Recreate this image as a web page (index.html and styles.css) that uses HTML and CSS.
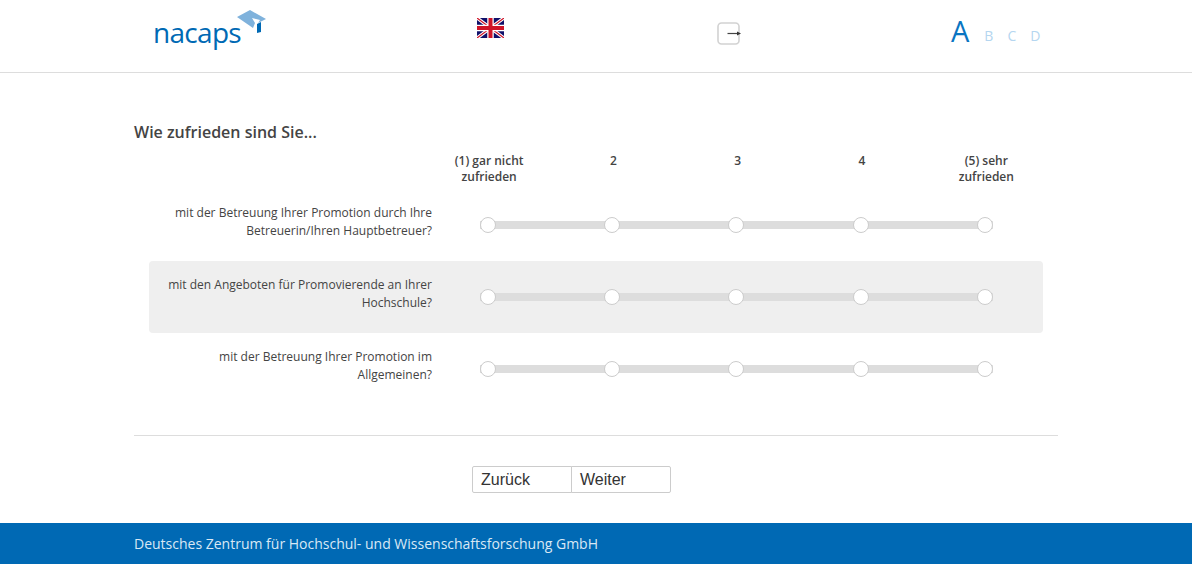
FILE: index.html
```html
<!DOCTYPE html>
<html lang="de">
<head>
    <meta charset="UTF-8">
    <title>nacaps</title>
    <link rel="stylesheet" href="styles.css">
</head>
<body>
    <header class="top">
        <div class="logo">
            <span class="logo-text">nacaps</span>
            <svg class="logo-cap" width="30" height="24" viewBox="0 0 30 24">
                <polygon fill="#7fb2dc" points="0,7 13,0 29,9 21,13 23,10 15,8 18,13 16,18"/>
                <polygon fill="#0069b4" points="20,14 24,12 24,22 20,23"/>
            </svg>
        </div>
        <a class="flag" href="#">
            <svg width="27" height="20" viewBox="0 0 27 20">
                <rect width="27" height="20" fill="#10106a"/>
                <path d="M0 0L27 20M27 0L0 20" stroke="#fff" stroke-width="3.4"/>
                <path d="M0 0L27 20M27 0L0 20" stroke="#cf1428" stroke-width="1.2"/>
                <path d="M13.5 0V20M0 10H27" stroke="#fff" stroke-width="6.5"/>
                <path d="M13.5 0V20M0 10H27" stroke="#cf1428" stroke-width="4"/>
            </svg>
        </a>
        <a class="logout" href="#">
            <svg width="24" height="23" viewBox="0 0 24 23">
                <rect x="1" y="1" width="21" height="21" rx="3.5" fill="#fff" stroke="#d2d2d2" stroke-width="1.6"/>
                <path d="M10.5 11.5H21" stroke="#444" stroke-width="1.2"/>
                <polygon fill="#333" points="20,9.5 24,11.5 20,13.5"/>
            </svg>
        </a>
        <div class="sizes">
            <a class="size-on" href="#">A</a>
            <a href="#">B</a>
            <a href="#">C</a>
            <a href="#">D</a>
        </div>
    </header>

    <main class="survey">
        <h1>Wie zufrieden sind Sie...</h1>

        <div class="scale">
            <span>(1) gar nicht zufrieden</span>
            <span>2</span>
            <span>3</span>
            <span>4</span>
            <span>(5) sehr zufrieden</span>
        </div>

        <div class="row">
            <p>mit der Betreuung Ihrer Promotion durch Ihre Betreuerin/Ihren Hauptbetreuer?</p>
            <div class="slider"><i></i><i></i><i></i><i></i><i></i></div>
        </div>
        <div class="row row-alt">
            <p>mit den Angeboten für Promovierende an Ihrer Hochschule?</p>
            <div class="slider"><i></i><i></i><i></i><i></i><i></i></div>
        </div>
        <div class="row">
            <p>mit der Betreuung Ihrer Promotion im Allgemeinen?</p>
            <div class="slider"><i></i><i></i><i></i><i></i><i></i></div>
        </div>

        <div class="nav">
            <button>Zurück</button>
            <button>Weiter</button>
        </div>
    </main>

    <footer class="bottom">Deutsches Zentrum für Hochschul- und Wissenschaftsforschung GmbH</footer>
</body>
</html>
```

FILE: styles.css
```css
body {
    margin: 0;
    font-family: "Open Sans", sans-serif;
    font-size: 12px;
    color: #444;
    background-color: #fff;
}
a {
    text-decoration: none;
}
.top {
    display: grid;
    grid-template-columns: 324px 240px 234px auto;
    height: 72px;
    padding-left: 153px;
    border-bottom: 1px solid #ddd;
}
.logo {
    display: flex;
    align-items: flex-start;
}
.logo-text {
    margin-top: 13px;
    font-size: 28px;
    line-height: 38px;
    font-weight: 500;
    letter-spacing: -0.7px;
    color: #0069b4;
}
.logo-cap {
    margin: 10px 0 0 -4px;
}
.flag {
    padding-top: 18px;
}
.logout {
    padding-top: 22px;
}
.sizes {
    display: flex;
    align-items: flex-start;
    gap: 14px;
    padding-top: 11px;
    font-size: 14px;
}
.sizes a {
    margin-top: 15px;
    line-height: 20px;
    color: #b5d6f0;
}
.sizes .size-on {
    margin: 0 1px 0 0;
    font-size: 29px;
    line-height: 40px;
    font-weight: 500;
    color: #0a75c2;
}
.survey {
    width: 924px;
    margin: 0 auto;
    padding-top: 48px;
}
h1 {
    margin: 0;
    font-size: 16px;
    line-height: 22px;
    font-weight: 600;
}
.scale {
    display: grid;
    grid-template-columns: repeat(5, 124.3px);
    margin-left: 293px;
    padding-top: 10px;
    height: 36px;
    line-height: 16px;
    font-weight: 600;
    text-align: center;
}
.scale span {
    padding: 0 22px;
}
.row {
    display: flex;
    align-items: center;
    height: 72px;
    margin: 0 15px;
    border-radius: 4px;
}
.row-alt {
    background-color: #efefef;
}
.row p {
    width: 270px;
    margin: 0 0 6px 13px;
    line-height: 18px;
    text-align: right;
}
.slider {
    display: flex;
    justify-content: space-between;
    width: 512.8px;
    margin-left: 48px;
    background: linear-gradient(#ddd, #ddd) center / 100% 8px no-repeat;
}
.slider i {
    width: 14px;
    height: 14px;
    border: 1px solid #ccc;
    border-radius: 50%;
    background-color: #fff;
}
.nav {
    display: flex;
    justify-content: center;
    margin-top: 30px;
    padding: 30px 49px 0 0;
    border-top: 1px solid #ddd;
}
.nav button {
    width: 100px;
    height: 27px;
    padding: 0 8px;
    border: 1px solid #ccc;
    border-radius: 0;
    background-color: #fff;
    font-family: "Liberation Sans", sans-serif;
    font-size: 16px;
    color: #333;
    text-align: left;
}
.nav button:first-child {
    border-radius: 2px 0 0 2px;
}
.nav button:last-child {
    margin-left: -1px;
    border-radius: 0 2px 2px 0;
}
.bottom {
    height: 41px;
    margin-top: 30px;
    padding-left: 134px;
    background-color: #0069b4;
    font-size: 14px;
    line-height: 41px;
    color: #d9e8f4;
}
```
